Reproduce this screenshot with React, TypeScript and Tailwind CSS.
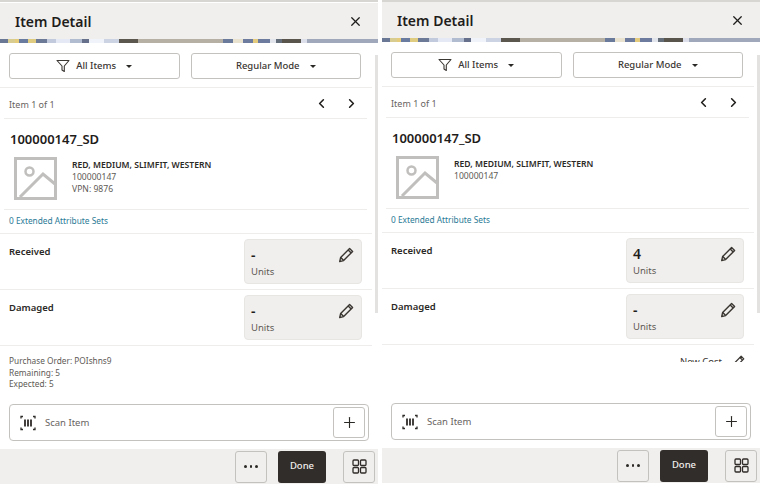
import { ChevronLeft, ChevronRight, Plus, X } from "lucide-react"

const stripBars = [
  [0, 8, "#6a7896"], [8, 7, "#d8cc90"], [15, 4, "#e4cc7c"], [19, 9, "#6a7ba0"], [28, 8, "#e0cc80"], [36, 11, "#6c7a98"],
  [47, 9, "#c2cadd"], [56, 14, "#e4e9f5"], [70, 12, "#b2bcd0"], [82, 7, "#66708a"], [89, 15, "#f0f3f9"], [104, 15, "#ccd4e4"],
  [119, 19, "#5c574e"], [138, 85, "#b5afa4"], [223, 10, "#6a7a9a"], [233, 10, "#e8e2cf"], [243, 10, "#6d7c9e"], [253, 5, "#e4ca7c"],
  [258, 12, "#6d7c9e"], [270, 6, "#e2e5ec"], [276, 6, "#646d7a"], [282, 19, "#5a554c"],
  [301, 6, "#dde0ea"], [307, 71, "#a0a8bc"],
] as const

function Strip() {
  return (
    <svg width="378" height="4" className="block bg-[#dfe4f0]">
      {stripBars.map(([x, w, fill], i) => (
        <rect key={i} x={x} y="0" width={w} height="4" fill={fill} />
      ))}
    </svg>
  )
}

function FilterIcon() {
  return (
    <svg width="14" height="14" viewBox="0 0 14 14" fill="none" stroke="#3a3632" strokeWidth="1.1">
      <path d="M1 1.5h12L8.3 7v5.5L6 11V7z" strokeLinejoin="round" />
    </svg>
  )
}

function Caret() {
  return <span className="w-0 h-0 border-x-[3px] border-x-transparent border-t-[3.5px] border-t-[#2b2926]" />
}

function PencilIcon({ size = 16 }: { size?: number }) {
  return (
    <svg width={size} height={size} viewBox="0 0 16 16" fill="none" stroke="#3a3632" strokeWidth="1.4" strokeLinejoin="round">
      <path d="M11.6 1.4l3 3-9 9.2-3.9 1 .9-4z" />
      <path d="M10.2 2.9l3 3" />
      <path d="M2.8 10.4l2.8 3" />
    </svg>
  )
}

function ImagePlaceholder() {
  return (
    <svg width="43" height="43" viewBox="0 0 43 43" fill="none" stroke="#c0bfbd" className="shrink-0">
      <rect x="1.5" y="1.5" width="40" height="40" strokeWidth="3" />
      <circle cx="15.5" cy="14.5" r="4" strokeWidth="2.5" />
      <path d="M6 40L29 17l12 10" strokeWidth="3" />
    </svg>
  )
}

function ScanIcon() {
  return (
    <svg width="16" height="16" viewBox="0 0 16 16" fill="none" stroke="#2f2c29" className="shrink-0">
      <path d="M1 3.5V1.5h2M13 1.5h2v2M15 12.5v2h-2M3 14.5H1v-2" strokeWidth="1.3" />
      <path d="M5 4.5v7M8 4.5v7M11 4.5v7" strokeWidth="1.8" />
    </svg>
  )
}

function GridIcon() {
  return (
    <svg width="15" height="15" viewBox="0 0 15 15" fill="none" stroke="#2f2c29" strokeWidth="1.3">
      <rect x="1" y="1" width="5.5" height="5.5" rx="1" />
      <rect x="8.5" y="1" width="5.5" height="5.5" rx="1" />
      <rect x="1" y="8.5" width="5.5" height="5.5" rx="1" />
      <rect x="8.5" y="8.5" width="5.5" height="5.5" rx="1" />
    </svg>
  )
}

function Divider({ inset }: { inset?: boolean }) {
  return <div className={inset ? "h-px bg-[#efedeb] ml-[4px] mr-[11px]" : "h-px bg-[#efedeb] mr-[6px]"} />
}

function QuantityRow({ label, value }: { label: string; value: string }) {
  return (
    <div className="flex justify-between pl-[9px] pr-[16px] pt-[5px] h-[55px]">
      <div className="text-[9.5px] font-semibold text-[#2b2926] pt-[6px]">{label}</div>
      <div className="w-[118px] h-[45px] rounded-[4px] bg-[#f1efed] border border-[#e8e6e3] flex justify-between pl-[6px] pr-[7px] pt-[7px]">
        <div className="flex flex-col">
          <span className="text-[14px] leading-[16px] font-semibold text-[#1f1d1b]">{value}</span>
          <span className="text-[9.5px] leading-[18px] text-[#5e5a55]">Units</span>
        </div>
        <PencilIcon />
      </div>
    </div>
  )
}

function Panel({ receivedValue, vpn, showPurchase, lift }: { receivedValue: string; vpn?: string; showPurchase?: boolean; lift?: boolean }) {
  return (
    <div className="relative w-[378px] shrink-0 h-[488px] flex flex-col bg-white">
      <div className={lift ? "h-[2px]" : "h-[3px]"}>
        <div className="h-[2px] bg-[#d8d6d3]" />
      </div>
      <div className="h-[36px] bg-[#f1efed] flex items-center justify-between pl-[15px] pr-[15px]">
        <span className="text-[14px] font-semibold text-[#1f1d1b]">Item Detail</span>
        <X size={15} strokeWidth={2} className="text-[#1f1d1b]" />
      </div>
      <Strip />

      <div className={showPurchase ? "h-[304px] overflow-hidden" : "h-[320px] overflow-hidden"}>
        <div className="flex gap-[11px] pl-[9px] pr-[17px] pt-[10px] pb-[8px]">
          <button className="flex-1 h-[26px] rounded-[3px] border border-[#c4c2bf] flex items-center justify-center gap-[6px] text-[9.5px] text-[#3a3632]">
            <FilterIcon />
            <span className="font-medium">All Items</span>
            <span className="ml-[4px] flex"><Caret /></span>
          </button>
          <button className="flex-1 h-[26px] rounded-[3px] border border-[#c4c2bf] flex items-center justify-center gap-[6px] text-[9.5px] text-[#3a3632]">
            <span className="font-medium">Regular Mode</span>
            <span className="ml-[4px] flex"><Caret /></span>
          </button>
        </div>
        <Divider />
        <div className="h-[30px] flex items-center justify-between pl-[9px] pr-[19px]">
          <span className="text-[9px] text-[#68645f] pt-[4px]">Item 1 of 1</span>
          <div className="flex gap-[15px] text-[#1f1d1b]">
            <ChevronLeft size={15} strokeWidth={2.5} />
            <ChevronRight size={15} strokeWidth={2.5} />
          </div>
        </div>
        <Divider inset />
        <div className="h-[90px] pl-[10px] pt-[12px]">
          <div className="text-[13px] leading-[17px] font-semibold text-[#1f1d1b]">100000147_SD</div>
          <div className="flex gap-[15px] pl-[4px] pt-[9px]">
            <ImagePlaceholder />
            <div className="text-[8.6px] leading-[12px] text-[#5e5a55] pt-[2px]">
              <div className="font-semibold text-[#2b2926]">RED, MEDIUM, SLIMFIT, WESTERN</div>
              <div>100000147</div>
              {vpn && <div>VPN: {vpn}</div>}
            </div>
          </div>
        </div>
        <Divider inset />
        <div className="h-[23px] flex items-center pl-[9px] text-[8.3px] text-[#2a7a96]">0 Extended Attribute Sets</div>
        <Divider />
        <QuantityRow label="Received" value={receivedValue} />
        <Divider />
        <QuantityRow label="Damaged" value="-" />
        <Divider />
        {!showPurchase && (
          <div className="flex justify-end items-center gap-[9px] pr-[15px] pt-[10px] text-[9.5px] text-[#3a3632]">
            <span>New Cost</span>
            <PencilIcon size={14} />
          </div>
        )}
      </div>

      <div className={showPurchase ? "h-[57px] pl-[9px] pt-[8px] text-[8.3px] leading-[11.5px] text-[#5e5a55]" : "h-[41px]"}>
        {showPurchase && (
          <>
            <div>Purchase Order: POIshns9</div>
            <div>Remaining: 5</div>
            <div>Expected: 5</div>
          </>
        )}
      </div>

      <div className="mx-[9px] h-[37px] rounded-[4px] border border-[#c4c2bf] flex items-center justify-between pl-[10px] pr-[3px]">
        <div className="flex items-center gap-[9px]">
          <ScanIcon />
          <span className="text-[9.5px] text-[#68645f] pt-[2px]">Scan Item</span>
        </div>
        <div className="w-[32px] h-[31px] rounded-[3px] border border-[#c4c2bf] flex items-center justify-center text-[#2b2926]">
          <Plus size={17} strokeWidth={1.6} />
        </div>
      </div>

      <div className="mt-[8px] h-[35px] bg-[#f1efed] flex items-center justify-end pr-[3px]">
        <button className="w-[32px] h-[32px] rounded-[3px] border border-[#c4c2bf] flex items-center justify-center gap-[3px]">
          <span className="w-[2.5px] h-[2.5px] rounded-full bg-[#2b2926]" />
          <span className="w-[2.5px] h-[2.5px] rounded-full bg-[#2b2926]" />
          <span className="w-[2.5px] h-[2.5px] rounded-full bg-[#2b2926]" />
        </button>
        <button className="ml-[11px] w-[48px] h-[32px] rounded-[3px] bg-[#312d2a] text-[#f1efed] text-[9.5px] font-medium">Done</button>
        <button className="ml-[17px] w-[32px] h-[32px] rounded-[3px] border border-[#c4c2bf] flex items-center justify-center">
          <GridIcon />
        </button>
      </div>

      {/* scrollbar sits over the content */}
      <div className="absolute left-[375px] top-[55px] w-[3px] h-[258px] bg-[#e3e2e0]" />
    </div>
  )
}

export default function App() {
  return (
    <div className="w-[765px] h-[488px] overflow-hidden bg-white flex gap-[4px] font-['Noto_Sans',sans-serif]">
      <Panel receivedValue="-" vpn="9876" showPurchase />
      <Panel receivedValue="4" lift />
    </div>
  )
}
